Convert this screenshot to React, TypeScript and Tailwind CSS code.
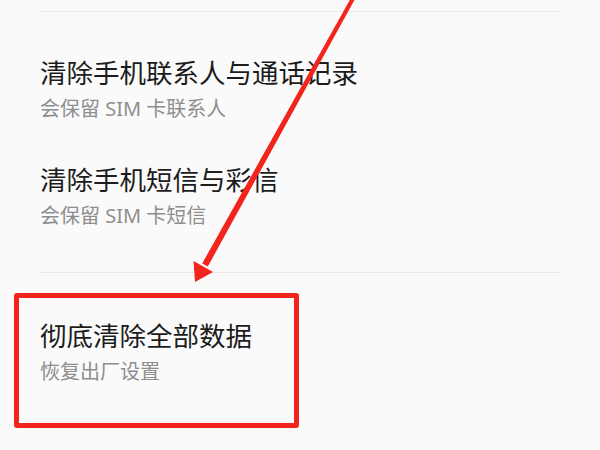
import React from 'react';

const items = [
  { title: '清除手机联系人与通话记录', sub: '会保留 SIM 卡联系人' },
  { title: '清除手机短信与彩信', sub: '会保留 SIM 卡短信' },
];

function Item({ title, sub }: { title: string; sub: string }) {
  return (
    <div className="flex flex-col">
      <div className="text-[26.5px] leading-[32px] text-[#1c1c1c]">{title}</div>
      <div className="mt-2 text-[20px] leading-[24px] text-[#8e8e8e]">{sub}</div>
    </div>
  );
}

export default function App() {
  return (
    <div
      className="relative w-[600px] h-[450px] overflow-hidden bg-[#fafafa]"
      style={{ fontFamily: '"Noto Sans", "Noto Sans CJK SC", sans-serif' }}
    >
      <div className="flex flex-col px-10">
        <div className="mt-[11px] h-px bg-[#e9e9e9]" />
        <div className="pt-[45px]">
          <Item {...items[0]} />
        </div>
        <div className="pt-[43px]">
          <Item {...items[1]} />
        </div>
        <div className="mt-[44px] h-px bg-[#e9e9e9]" />
        <div className="pt-[47px]">
          <Item title="彻底清除全部数据" sub="恢复出厂设置" />
        </div>
      </div>

      {/* annotation box */}
      <div className="absolute left-[14px] top-[293px] w-[285px] h-[135px] border-[5px] border-[#f3241c] rounded-[3px]" />

      {/* annotation arrow */}
      <svg className="absolute inset-0" width="600" height="450" viewBox="0 0 600 450">
        <polygon points="351.5,-3 355,-1 207.8,266.5 202.2,263.5" fill="#f3241c" />
        <polygon points="195,282 193.5,261 213,272" fill="#f3241c" />
      </svg>
    </div>
  );
}
